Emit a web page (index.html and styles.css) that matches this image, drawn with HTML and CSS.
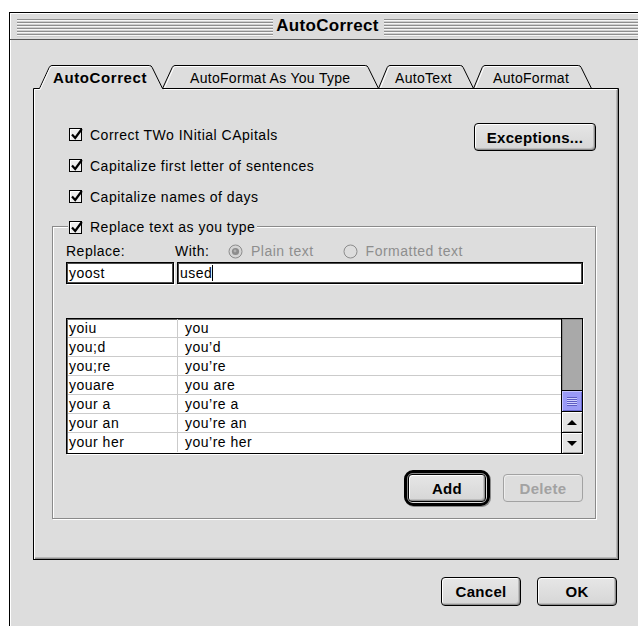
FILE: index.html
```html
<!DOCTYPE html>
<html lang="en">
<head>
<meta charset="utf-8">
<title>AutoCorrect</title>
<link rel="stylesheet" href="styles.css">
</head>
<body>
<div class="window">
  <div class="titlebar">
    <span class="grip"></span>
    <span class="title">AutoCorrect</span>
    <span class="grip"></span>
  </div>
  <div class="content">
    <svg class="tabs" width="587" height="27" viewBox="0 0 587 27">
      <!-- inactive tabs -->
      <g fill="none" stroke="#000">
        <path d="M129.5 25.5 L139.2 4.5 Q140.2 2.5 142 2.5 H332.5 Q334.3 2.5 335.2 4.5 L345.5 25.5"/>
        <path d="M345.5 25.5 L354.2 4.5 Q355.2 2.5 357 2.5 H427.5 Q429.3 2.5 430.2 4.5 L440.5 25.5"/>
        <path d="M440.5 25.5 L449.2 4.5 Q450.2 2.5 452 2.5 H545.5 Q547.3 2.5 548.2 4.5 L558.5 25.5"/>
      </g>
      <g fill="none" stroke="#fff">
        <path d="M131.5 25 L140.6 5 Q141.3 3.5 142.5 3.5 H332"/>
        <path d="M347.5 25 L355.6 5 Q356.3 3.5 357.5 3.5 H427"/>
        <path d="M442.5 25 L450.6 5 Q451.3 3.5 452.5 3.5 H545"/>
      </g>
      <!-- panel edge with the open front tab -->
      <path d="M0.5 27 V25.5 H6.5 L16.2 4.5 Q17.2 2.5 19 2.5 H116.5 Q118.3 2.5 119.2 4.5 L129.5 25.5 H585.5 V27" fill="none" stroke="#000"/>
      <path d="M1.5 27 V26.5 H7.2 L17.2 5 Q18 3.5 19.5 3.5 H116" fill="none" stroke="#fff"/>
      <path d="M131 26.5 H584" stroke="#fff"/>
      <path d="M584.5 26 V27" stroke="#999"/>
      <text class="tab-label tab-active" x="20" y="19.5">AutoCorrect</text>
      <text class="tab-label" x="157" y="19.5">AutoFormat As You Type</text>
      <text class="tab-label" x="362" y="19.5">AutoText</text>
      <text class="tab-label" x="460" y="19.5">AutoFormat</text>
    </svg>

    <div class="panel">
      <div class="options">
        <div class="checks">
          <div class="check">
            <svg class="cb" width="16" height="15" viewBox="0 0 16 15"><rect x="0.5" y="1.5" width="12" height="12" fill="#eee" stroke="#000"/><path d="M1.5 12.5 V2.5 H11.5" stroke="#fff" fill="none"/><path d="M3 7.5 L6.2 11 L12.8 2" stroke="#000" stroke-width="2.2" fill="none"/></svg>
            <span>Correct TWo INitial CApitals</span>
          </div>
          <div class="check">
            <svg class="cb" width="16" height="15" viewBox="0 0 16 15"><rect x="0.5" y="1.5" width="12" height="12" fill="#eee" stroke="#000"/><path d="M1.5 12.5 V2.5 H11.5" stroke="#fff" fill="none"/><path d="M3 7.5 L6.2 11 L12.8 2" stroke="#000" stroke-width="2.2" fill="none"/></svg>
            <span>Capitalize first letter of sentences</span>
          </div>
          <div class="check">
            <svg class="cb" width="16" height="15" viewBox="0 0 16 15"><rect x="0.5" y="1.5" width="12" height="12" fill="#eee" stroke="#000"/><path d="M1.5 12.5 V2.5 H11.5" stroke="#fff" fill="none"/><path d="M3 7.5 L6.2 11 L12.8 2" stroke="#000" stroke-width="2.2" fill="none"/></svg>
            <span>Capitalize names of days</span>
          </div>
        </div>
        <button class="btn btn-exceptions">Exceptions...</button>
      </div>

      <div class="group">
        <div class="legend check">
          <svg class="cb" width="16" height="15" viewBox="0 0 16 15"><rect x="0.5" y="1.5" width="12" height="12" fill="#eee" stroke="#000"/><path d="M1.5 12.5 V2.5 H11.5" stroke="#fff" fill="none"/><path d="M3 7.5 L6.2 11 L12.8 2" stroke="#000" stroke-width="2.2" fill="none"/></svg>
          <span>Replace text as you type</span>
        </div>

        <div class="labels">
          <span class="lbl-replace">Replace:</span>
          <span class="lbl-with">With:</span>
          <span class="radio disabled">
            <svg class="rb" width="15" height="15" viewBox="0 0 15 15"><circle cx="7.5" cy="7.5" r="6.5" fill="#d4d4d4" stroke="#8c8c8c"/><circle cx="7.5" cy="7.5" r="3.6" fill="#8c8c8c"/><circle cx="7" cy="7" r="1.4" fill="#b0b0b0"/></svg>
            Plain text
          </span>
          <span class="radio disabled">
            <svg class="rb" width="15" height="15" viewBox="0 0 15 15"><circle cx="7.5" cy="7.5" r="6.5" fill="#dddddd" stroke="#8c8c8c"/></svg>
            Formatted text
          </span>
        </div>

        <div class="fields">
          <div class="field field-replace">yoost</div>
          <div class="field field-with">used<span class="caret"></span></div>
        </div>

        <div class="list">
          <div class="rows">
            <div class="row"><span class="c1">yoiu</span><span class="c2">you</span></div>
            <div class="row"><span class="c1">you;d</span><span class="c2">you’d</span></div>
            <div class="row"><span class="c1">you;re</span><span class="c2">you’re</span></div>
            <div class="row"><span class="c1">youare</span><span class="c2">you are</span></div>
            <div class="row"><span class="c1">your a</span><span class="c2">you’re a</span></div>
            <div class="row"><span class="c1">your an</span><span class="c2">you’re an</span></div>
            <div class="row"><span class="c1">your her</span><span class="c2">you’re her</span></div>
          </div>
          <div class="scrollbar">
            <div class="track"></div>
            <div class="thumb"><span class="thumb-grip"></span></div>
            <div class="arrow arrow-up"><span></span></div>
            <div class="arrow arrow-down"><span></span></div>
          </div>
        </div>

        <div class="actions">
          <span class="default-ring"><button class="btn btn-add">Add</button></span>
          <button class="btn btn-delete" disabled>Delete</button>
        </div>
      </div>
    </div>

    <div class="footer">
      <button class="btn btn-footer">Cancel</button>
      <button class="btn btn-footer">OK</button>
    </div>
  </div>
</div>
</body>
</html>
```

FILE: styles.css
```css
html, body {
  margin: 0;
  padding: 0;
  background: #fff;
  overflow: hidden;
}

body {
  width: 638px;
  height: 626px;
  font-family: "Liberation Sans", Arial, sans-serif;
  font-size: 14px;
  letter-spacing: 0.5px;
  color: #000;
}

/* ---------- window frame ---------- */
.window {
  margin: 12px 0 0 9px;
  width: 630px;
  height: 620px;
  border-top: 1px solid #000;
  border-left: 1px solid #000;
  background: #dddddd;
  box-shadow: inset 1px 0 0 #fff;
}

.titlebar {
  height: 27px;
  box-sizing: border-box;
  padding: 3px 0 0 7px;
  display: flex;
  align-items: center;
  border-bottom: 1px solid #555;
  background: #dcdcdc;
  box-shadow: inset 1px 1px 0 #fff;
}

.grip {
  flex: 1;
  height: 18px;
  background: repeating-linear-gradient(to bottom,
    #8e8e8e 0, #8e8e8e 1px,
    #f6f6f6 1px, #f6f6f6 2px,
    #cfcfcf 2px, #cfcfcf 3px);
}

.title {
  font-weight: bold;
  font-size: 17px;
  letter-spacing: 0.3px;
  line-height: 18px;
  margin-top: -3px;
  padding: 0 5px 0 3px;
}

.content {
  padding: 23px 23px 0 23px;
}

/* ---------- tabs ---------- */
.tabs {
  display: block;
  overflow: visible;
}

.tab-label {
  font-family: "Liberation Sans", Arial, sans-serif;
  font-size: 14px;
  letter-spacing: 0.3px;
  fill: #000;
}

.tab-active {
  font-weight: bold;
  font-size: 15px;
  letter-spacing: 0.6px;
}

.panel {
  width: 586px;
  height: 470px;
  box-sizing: border-box;
  border: 1px solid #000;
  border-top: none;
  padding: 29px 22px 0 18px;
  box-shadow: inset 1px 0 0 #fff, inset -1px -1px 0 #8e8e8e, inset -2px -2px 0 #b8b8b8;
}

/* ---------- check boxes ---------- */
.options {
  display: flex;
  justify-content: space-between;
  align-items: flex-start;
  padding-left: 17px;
}

.check {
  display: flex;
  align-items: center;
  height: 31px;
}

.cb {
  flex: none;
  margin-right: 5px;
}

/* ---------- buttons ---------- */
.btn {
  font-family: "Liberation Sans", Arial, sans-serif;
  font-weight: bold;
  font-size: 15px;
  letter-spacing: 0.3px;
  color: #000;
  height: 28px;
  padding: 0;
  border: 1px solid #000;
  border-radius: 4px;
  background: linear-gradient(#e6e6e6, #d6d6d6);
  box-shadow: inset 1px 1px 0 #fff, inset -1px -1px 0 #8e8e8e, inset -2px -2px 0 #bdbdbd;
}

.btn-exceptions {
  width: 122px;
  margin-top: 4px;
}

.btn-add {
  width: 78px;
  display: block;
}

.default-ring {
  display: block;
  padding: 1px;
  border: 3px solid #000;
  border-radius: 9px;
  box-shadow: inset 1px 1px 0 #888, 1px 1px 0 #888;
}

.btn-delete {
  width: 80px;
  color: #a2a2a2;
  border-color: #a2a2a2;
  background: #dddddd;
  box-shadow: inset 1px 1px 0 #eee;
}

/* ---------- replace group ---------- */
.group {
  margin-top: 14px;
  height: 293px;
  box-sizing: border-box;
  border: 1px solid #8a8a8a;
  box-shadow: 1px 1px 0 #fff, inset 1px 1px 0 #fff;
  padding: 0 12px 0 13px;
  display: flex;
  flex-direction: column;
}

.legend {
  align-self: flex-start;
  height: 16px;
  margin: -8px 0 0 2px;
  padding: 0 2px 0 1px;
  background: #dddddd;
}

.labels {
  margin-top: 7px;
  height: 18px;
  display: flex;
  align-items: center;
}

.lbl-replace {
  width: 109px;
}

.lbl-with {
  width: 53px;
}

.radio {
  display: flex;
  align-items: center;
}

.radio .rb {
  margin-right: 8px;
}

.radio + .radio {
  margin-left: 29px;
}

.disabled {
  color: #8e8e8e;
}

.fields {
  margin-top: 2px;
  display: flex;
  gap: 3px;
}

.field {
  height: 22px;
  box-sizing: border-box;
  border: 1px solid #000;
  background: #fff;
  box-shadow: inset 1px 1px 0 #4a4a4a, inset -1px -1px 0 #4a4a4a, 1px 1px 0 #fff;
  padding: 0 2px;
  line-height: 18px;
  display: flex;
  align-items: center;
}

.field-replace {
  width: 108px;
}

.field-with {
  flex: 1;
}

.caret {
  display: inline-block;
  width: 1px;
  height: 16px;
  background: #000;
}

/* ---------- replacement list ---------- */
.list {
  margin-top: 34px;
  height: 136px;
  box-sizing: border-box;
  border: 1px solid #000;
  box-shadow: inset 1px 1px 0 #666, 1px 1px 0 #fff;
  display: flex;
  background: #fff;
}

.rows {
  flex: 1;
  padding-left: 1px;
}

.row {
  display: flex;
  height: 19px;
  box-sizing: border-box;
  border-bottom: 1px solid #cbcbcb;
  line-height: 18px;
}

.row:last-child {
  border-bottom: none;
}

.c1 {
  width: 110px;
  box-sizing: border-box;
  padding-left: 1px;
  border-right: 1px solid #cbcbcb;
}

.c2 {
  padding-left: 7px;
}

.scrollbar {
  width: 21px;
  box-sizing: border-box;
  border-left: 1px solid #000;
  display: flex;
  flex-direction: column;
}

.track {
  flex: 1;
  background: #a9a9a9;
  box-shadow: inset 1px 1px 0 #8a8a8a;
}

.thumb {
  height: 21px;
  box-sizing: border-box;
  border-top: 1px solid #000;
  background: #9a9af6;
  box-shadow: inset 1px 1px 0 #c4c4ff, inset -1px -1px 0 #6a6ad0;
  display: flex;
  align-items: center;
  justify-content: center;
}

.thumb-grip {
  width: 10px;
  height: 9px;
  background: repeating-linear-gradient(to bottom,
    #5c5cc4 0, #5c5cc4 1px,
    #d0d0ff 1px, #d0d0ff 2px);
}

.arrow {
  height: 21px;
  box-sizing: border-box;
  border-top: 1px solid #000;
  background: #e4e4e4;
  box-shadow: inset 1px 1px 0 #fff, inset -1px -1px 0 #aaa;
  display: flex;
  align-items: center;
  justify-content: center;
}

.arrow span {
  width: 0;
  height: 0;
  border-left: 5px solid transparent;
  border-right: 5px solid transparent;
}

.arrow-up span {
  border-bottom: 5px solid #000;
}

.arrow-down span {
  border-top: 5px solid #000;
}

.actions {
  margin-top: 16px;
  display: flex;
  justify-content: flex-end;
  align-items: center;
  gap: 13px;
}

/* ---------- dialog buttons ---------- */
.footer {
  margin-top: 17px;
  display: flex;
  justify-content: flex-end;
  gap: 16px;
}

.btn-footer {
  width: 80px;
  height: 29px;
}
```
